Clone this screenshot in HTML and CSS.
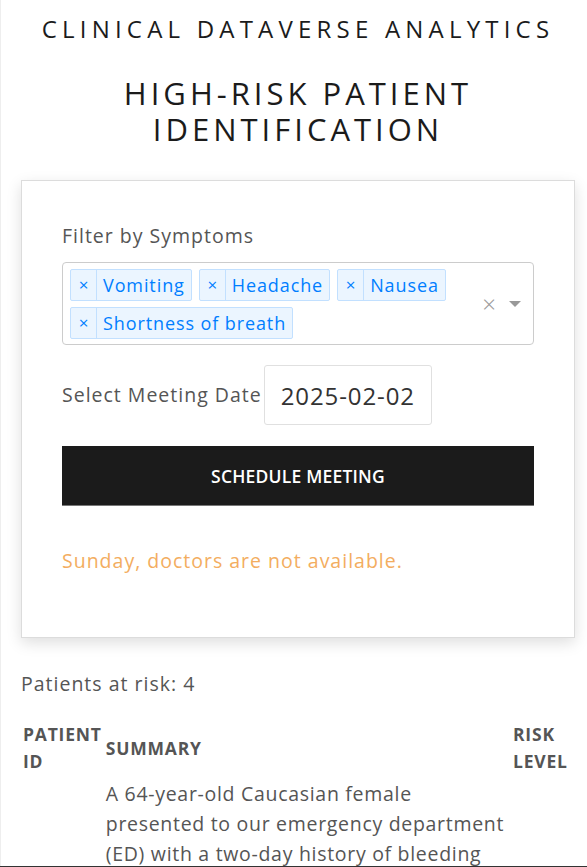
FILE: index.html
```html
<!DOCTYPE html>
<html lang="en">
<head>
<meta charset="utf-8">
<title>Clinical Dataverse Analytics</title>
<link rel="stylesheet" href="styles.css">
</head>
<body>
<div class="page">
  <h1 class="brand">CLINICAL DATAVERSE ANALYTICS</h1>
  <h2 class="title">HIGH-RISK PATIENT IDENTIFICATION</h2>

  <section class="card">
    <label class="field-label">Filter by Symptoms</label>
    <div class="select">
      <div class="tags">
        <span class="tag"><span class="tag-x">×</span><span class="tag-label">Vomiting</span></span>
        <span class="tag"><span class="tag-x">×</span><span class="tag-label">Headache</span></span>
        <span class="tag"><span class="tag-x">×</span><span class="tag-label">Nausea</span></span>
        <span class="tag"><span class="tag-x">×</span><span class="tag-label">Shortness of breath</span></span>
      </div>
      <div class="select-controls">
        <span class="clear">×</span>
        <span class="arrow"></span>
      </div>
    </div>

    <div class="date-row">
      <span class="field-label inline">Select Meeting Date</span>
      <div class="date-input">2025-02-02</div>
    </div>

    <button class="btn">SCHEDULE MEETING</button>

    <p class="warning">Sunday, doctors are not available.</p>
  </section>

  <p class="count">Patients at risk: 4</p>

  <table class="patients">
    <thead>
      <tr>
        <th class="col-id">PATIENT ID</th>
        <th class="col-summary">SUMMARY</th>
        <th class="col-risk">RISK LEVEL</th>
      </tr>
    </thead>
    <tbody>
      <tr>
        <td class="col-id">P-1042</td>
        <td class="col-summary">A 64-year-old Caucasian female presented to our emergency department (ED) with a two-day history of bleeding gums, vomiting, headache and nausea. She also reported shortness of breath on minimal exertion and generalized fatigue over the preceding week. Her past medical history was notable for hypertension and type 2 diabetes mellitus.</td>
        <td class="col-risk">High</td>
      </tr>
    </tbody>
  </table>
</div>
<div class="bottom-bar"></div>
</body>
</html>
```

FILE: styles.css
```css
* { box-sizing: border-box; }

html, body {
  margin: 0;
  padding: 0;
  background: #fff;
}

body {
  font-family: "Open Sans", "Noto Sans", sans-serif;
  color: #555;
  font-size: 19.5px;
  letter-spacing: 1px;
}

.page {
  border-left: 1px solid #eeeeee;
  padding: 13px 12px 40px 20px;
  min-height: 867px;
}

.brand {
  margin: 0;
  text-align: center;
  font-size: 24px;
  font-weight: 400;
  letter-spacing: 5.2px;
  line-height: 32px;
  color: #1b1b1b;
  white-space: nowrap;
}

.title {
  margin: 30px auto 0;
  text-align: center;
  font-size: 31px;
  font-weight: 400;
  line-height: 36px;
  letter-spacing: 4px;
  color: #1b1b1b;
  max-width: 400px;
}

.card {
  margin-top: 33px;
  border: 1px solid #dcdcdc;
  box-shadow: 0 5px 14px rgba(0, 0, 0, 0.13);
  padding: 41px 40px 62px;
  background: #fff;
}

.field-label {
  display: block;
  line-height: 28px;
  color: #555;
}

.field-label.inline { display: inline-block; }

.select {
  margin-top: 12px;
  border: 1px solid #cccccc;
  border-radius: 4px;
  display: flex;
  align-items: center;
  padding: 6px 8px 5px 7px;
}

.tags {
  flex: 1;
  display: flex;
  flex-wrap: wrap;
  gap: 6px 7px;
}

.tag {
  display: inline-flex;
  align-items: stretch;
  background: #ebf5ff;
  border: 1px solid #c2e0ff;
  border-radius: 2px;
  color: #007eff;
  font-size: 18px;
  line-height: 30px;
  letter-spacing: 0.9px;
}

.tag-x {
  width: 26px;
  text-align: center;
  border-right: 1px solid #c2e0ff;
  font-size: 17px;
  letter-spacing: 0;
}

.tag-label {
  padding: 0 6px 0 6px;
}

.select-controls {
  display: flex;
  align-items: center;
  gap: 12px;
  padding-right: 4px;
}

.clear {
  color: #999;
  font-size: 24px;
  line-height: 20px;
  font-weight: 300;
}

.arrow {
  width: 0;
  height: 0;
  border-left: 6px solid transparent;
  border-right: 6px solid transparent;
  border-top: 6px solid #999;
}

.date-row {
  margin-top: 20px;
  display: flex;
  align-items: center;
}

.date-input {
  margin-left: 2px;
  border: 1px solid #e0e0e0;
  border-radius: 3px;
  height: 60px;
  padding: 0 16px 0 16px;
  display: flex;
  align-items: center;
  font-size: 24px;
  color: #333;
  letter-spacing: 0.9px;
}

.btn {
  display: block;
  width: 100%;
  margin-top: 21px;
  height: 60px;
  background: #1b1b1b;
  color: #fff;
  border: none;
  border-bottom: 1px solid #777;
  font-family: inherit;
  font-size: 17.5px;
  font-weight: 600;
  letter-spacing: 0.2px;
  cursor: pointer;
}

.warning {
  margin: 41px 0 0;
  color: #f3ad60;
  line-height: 28px;
}

.count {
  margin: 32px 0 0;
  line-height: 28px;
}

.patients {
  margin-top: 20px;
  width: 100%;
  border-collapse: separate;
  border-spacing: 2px;
  margin-left: -1px;
}

.patients th {
  font-size: 17.5px;
  font-weight: 700;
  color: #555;
  text-align: left;
  line-height: 27px;
  padding: 1px;
  vertical-align: middle;
  letter-spacing: 0.8px;
}

.patients td {
  line-height: 30px;
  padding: 1px;
  vertical-align: middle;
  letter-spacing: 0.7px;
}

.patients th.col-id { width: 80px; }
.patients th.col-risk { width: 60px; }

.bottom-bar {
  position: fixed;
  left: 0;
  right: 0;
  bottom: 0;
  height: 1px;
  background: #333;
}
```
